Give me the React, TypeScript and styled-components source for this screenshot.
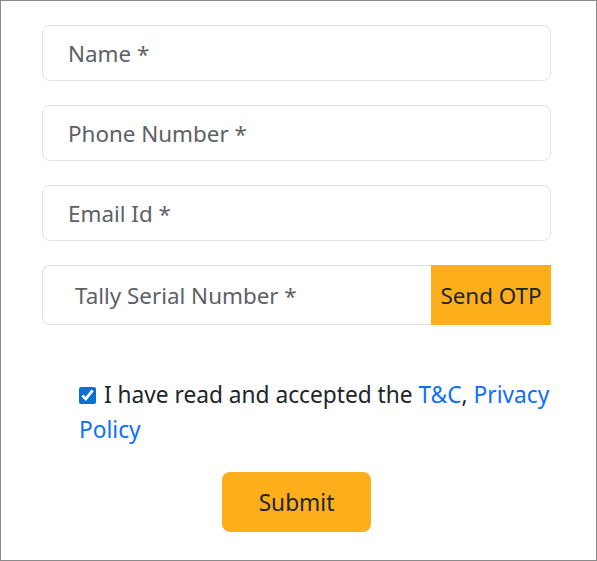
import styled, { createGlobalStyle } from 'styled-components';

const GlobalStyle = createGlobalStyle`
  * {
    box-sizing: border-box;
  }

  body {
    margin: 0;
    font-family: 'Noto Sans', 'Open Sans', sans-serif;
    color: #212529;
    background: #fff;
  }
`;

const Frame = styled.div`
  width: 597px;
  height: 561px;
  border: 1px solid #8a8a8a;
  padding: 24px 45px 0 41px;
`;

const Form = styled.form`
  display: flex;
  flex-direction: column;
`;

const Field = styled.input`
  width: 100%;
  height: 56px;
  margin-bottom: 24px;
  padding: 0 25px;
  font-family: inherit;
  font-size: 22.4px;
  color: #212529;
  border: 1px solid #dee2e6;
  border-radius: 8px;
  outline: none;

  &::placeholder {
    color: #5c6166;
  }
`;

const InputGroup = styled.div`
  display: flex;
  height: 60px;
`;

const GroupField = styled(Field)`
  flex: 1;
  min-width: 0;
  height: 100%;
  margin: 0;
  padding-left: 32px;
  border-right: none;
  border-radius: 8px 0 0 8px;
`;

const OtpButton = styled.button`
  width: 120px;
  border: none;
  background: #fdaf1b;
  font-family: inherit;
  font-size: 22.4px;
  color: #212529;
  padding: 0;
  cursor: pointer;
`;

const Consent = styled.label`
  display: block;
  margin: 52px 0 0 37px;
  font-size: 22.7px;
  line-height: 35px;
  color: #212529;
`;

const Check = styled.input`
  width: 17px;
  height: 17px;
  margin: 0 8px 0 0;
  vertical-align: -1px;
  accent-color: #0b6fd3;
`;

const Link = styled.a`
  color: #0d6efd;
  text-decoration: none;
`;

const SubmitButton = styled.button`
  align-self: center;
  width: 149px;
  height: 60px;
  margin-top: 25px;
  border: none;
  border-radius: 8px;
  background: #fdaf1b;
  font-family: inherit;
  font-size: 22.7px;
  color: #212529;
  cursor: pointer;
`;

export default function App() {
  return (
    <>
      <GlobalStyle />
      <Frame>
        <Form onSubmit={(e) => e.preventDefault()}>
          <Field placeholder="Name *" />
          <Field placeholder="Phone Number *" />
          <Field placeholder="Email Id *" />
          <InputGroup>
            <GroupField placeholder="Tally Serial Number *" />
            <OtpButton type="button">Send OTP</OtpButton>
          </InputGroup>
          <Consent>
            <Check type="checkbox" defaultChecked />
            I have read and accepted the <Link href="#">T&amp;C</Link>,{' '}
            <Link href="#">Privacy Policy</Link>
          </Consent>
          <SubmitButton type="submit">Submit</SubmitButton>
        </Form>
      </Frame>
    </>
  );
}
